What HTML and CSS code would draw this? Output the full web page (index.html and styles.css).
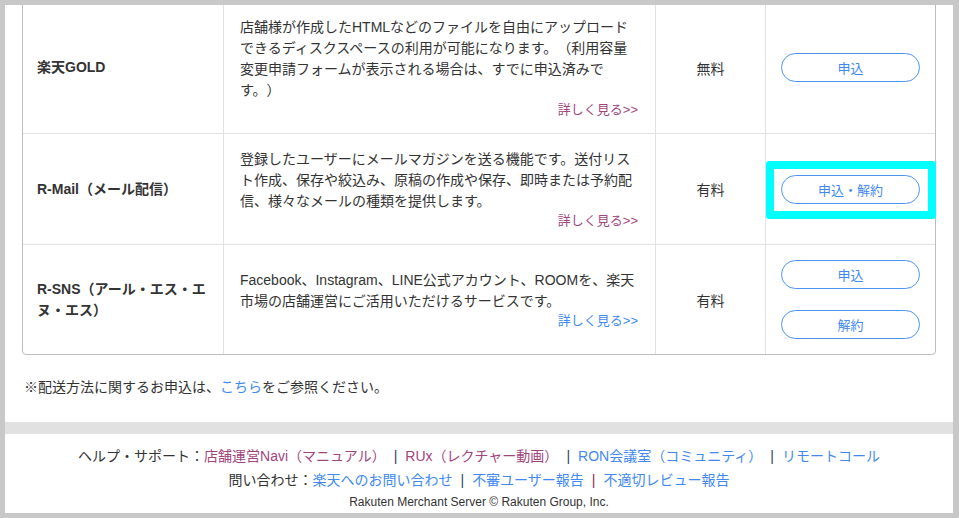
FILE: index.html
```html
<!DOCTYPE html>
<html lang="ja">
<head>
    <meta charset="UTF-8">
    <meta name="viewport" content="width=device-width, initial-scale=1.0">
    <title>サービス申込</title>
    <link rel="stylesheet" href="styles.css">
</head>
<body>
    <div class="frame">
        <div class="content">
            <table class="service-table">
                <colgroup>
                    <col class="col-name">
                    <col class="col-desc">
                    <col class="col-price">
                    <col class="col-action">
                </colgroup>
                <tr>
                    <td class="name">楽天GOLD</td>
                    <td class="desc">
                        <p>店舗様が作成したHTMLなどのファイルを自由にアップロードできるディスクスペースの利用が可能になります。（利用容量変更申請フォームが表示される場合は、すでに申込済みで<br>す。）</p>
                        <a class="more visited" href="#">詳しく見る&gt;&gt;</a>
                    </td>
                    <td class="price">無料</td>
                    <td class="action">
                        <button class="apply-btn">申込</button>
                    </td>
                </tr>
                <tr>
                    <td class="name">R-Mail（メール配信）</td>
                    <td class="desc">
                        <p>登録したユーザーにメールマガジンを送る機能です。送付リスト作成、保存や絞込み、原稿の作成や保存、即時または予約配信、様々なメールの種類を提供します。</p>
                        <a class="more visited" href="#">詳しく見る&gt;&gt;</a>
                    </td>
                    <td class="price">有料</td>
                    <td class="action">
                        <span class="highlight"><button class="apply-btn">申込・解約</button></span>
                    </td>
                </tr>
                <tr>
                    <td class="name">R-SNS（アール・エス・エヌ・エス）</td>
                    <td class="desc">
                        <p>Facebook、Instagram、LINE公式アカウント、ROOMを、楽天市場の店舗運営にご活用いただけるサービスです。</p>
                        <a class="more" href="#">詳しく見る&gt;&gt;</a>
                    </td>
                    <td class="price">有料</td>
                    <td class="action">
                        <div class="btn-stack">
                            <button class="apply-btn">申込</button>
                            <button class="apply-btn">解約</button>
                        </div>
                    </td>
                </tr>
            </table>

            <p class="note">※配送方法に関するお申込は、<a href="#">こちら</a>をご参照ください。</p>
        </div>

        <div class="band"></div>

        <div class="footer">
            <div class="footer-line">
                ヘルプ・サポート：<a class="visited" href="#">店舗運営Navi（マニュアル）</a><span class="sep">|</span><a class="visited" href="#">RUx（レクチャー動画）</a><span class="sep">|</span><a href="#">RON会議室（コミュニティ）</a><span class="sep">|</span><a href="#">リモートコール</a>
            </div>
            <div class="footer-line">
                問い合わせ：<a href="#">楽天へのお問い合わせ</a><span class="sep">|</span><a href="#">不審ユーザー報告</a><span class="sep sep-red">|</span><a href="#">不適切レビュー報告</a>
            </div>
            <div class="copyright">Rakuten Merchant Server © Rakuten Group, Inc.</div>
        </div>
    </div>
</body>
</html>
```

FILE: styles.css
```css
body {
    margin: 0;
    background-color: #c8c8c8;
    font-family: "Liberation Sans", "Noto Sans CJK JP", sans-serif;
    color: #333;
    text-spacing-trim: space-all;
}
a {
    color: #4189f0;
    text-decoration: none;
}
a.visited {
    color: #a3457d;
}
.frame {
    margin: 5px 6px 5px 5px;
    height: 508px;
    background-color: #fff;
    overflow: hidden;
}
.content {
    padding: 0 18px 0 17px;
}
.service-table {
    margin-top: -4px;
    width: 914px;
    table-layout: fixed;
    border-collapse: separate;
    border-spacing: 0;
    border: 1px solid #bdbdbd;
    border-radius: 4px;
    font-size: 14px;
}
.col-name {
    width: 201px;
}
.col-desc {
    width: 432px;
}
.col-price {
    width: 110px;
}
.col-action {
    width: 169px;
}
.service-table td {
    padding: 15px;
    border-right: 1px solid #e2e2e2;
    border-bottom: 1px solid #e2e2e2;
    vertical-align: middle;
}
.service-table td:last-child {
    border-right: none;
}
.service-table tr:last-child td {
    border-bottom: none;
}
.name {
    font-weight: bold;
    line-height: 21px;
    padding-left: 14px !important;
}
.desc {
    padding: 15px 17px 15px 16px !important;
}
.desc p {
    margin: 0;
    line-height: 21px;
}
.more {
    display: block;
    text-align: right;
    font-size: 13px;
    line-height: 17px;
}
.price {
    text-align: center;
}
.action {
    text-align: center;
}
.apply-btn {
    width: 139px;
    height: 29px;
    padding: 0;
    background-color: #fff;
    border: 1px solid #4d94f0;
    border-radius: 15px;
    color: #4189f0;
    font-family: inherit;
    font-size: 13px;
    cursor: pointer;
}
.btn-stack {
    display: flex;
    flex-direction: column;
    align-items: center;
    gap: 21px;
}
.highlight {
    position: relative;
    display: inline-block;
    vertical-align: top;
}
.highlight .apply-btn {
    display: block;
}
.highlight::after {
    content: "";
    position: absolute;
    left: -15px;
    right: -16px;
    top: -14px;
    bottom: -15px;
    border: 8px solid #00ffff;
    border-radius: 3px;
    pointer-events: none;
}
.note {
    margin: 22px 0 0 2px;
    font-size: 14px;
    line-height: 21px;
}
.band {
    margin-top: 24px;
    height: 12px;
    background-color: #e1e1e1;
}
.footer {
    padding-top: 10px;
    text-align: center;
    font-size: 14px;
}
.footer-line {
    line-height: 24px;
}
.sep {
    margin: 0 8px;
    color: #2f3f66;
}
.sep-red {
    color: #8c2b55;
}
.copyright {
    font-size: 12px;
    line-height: 20px;
}
```
